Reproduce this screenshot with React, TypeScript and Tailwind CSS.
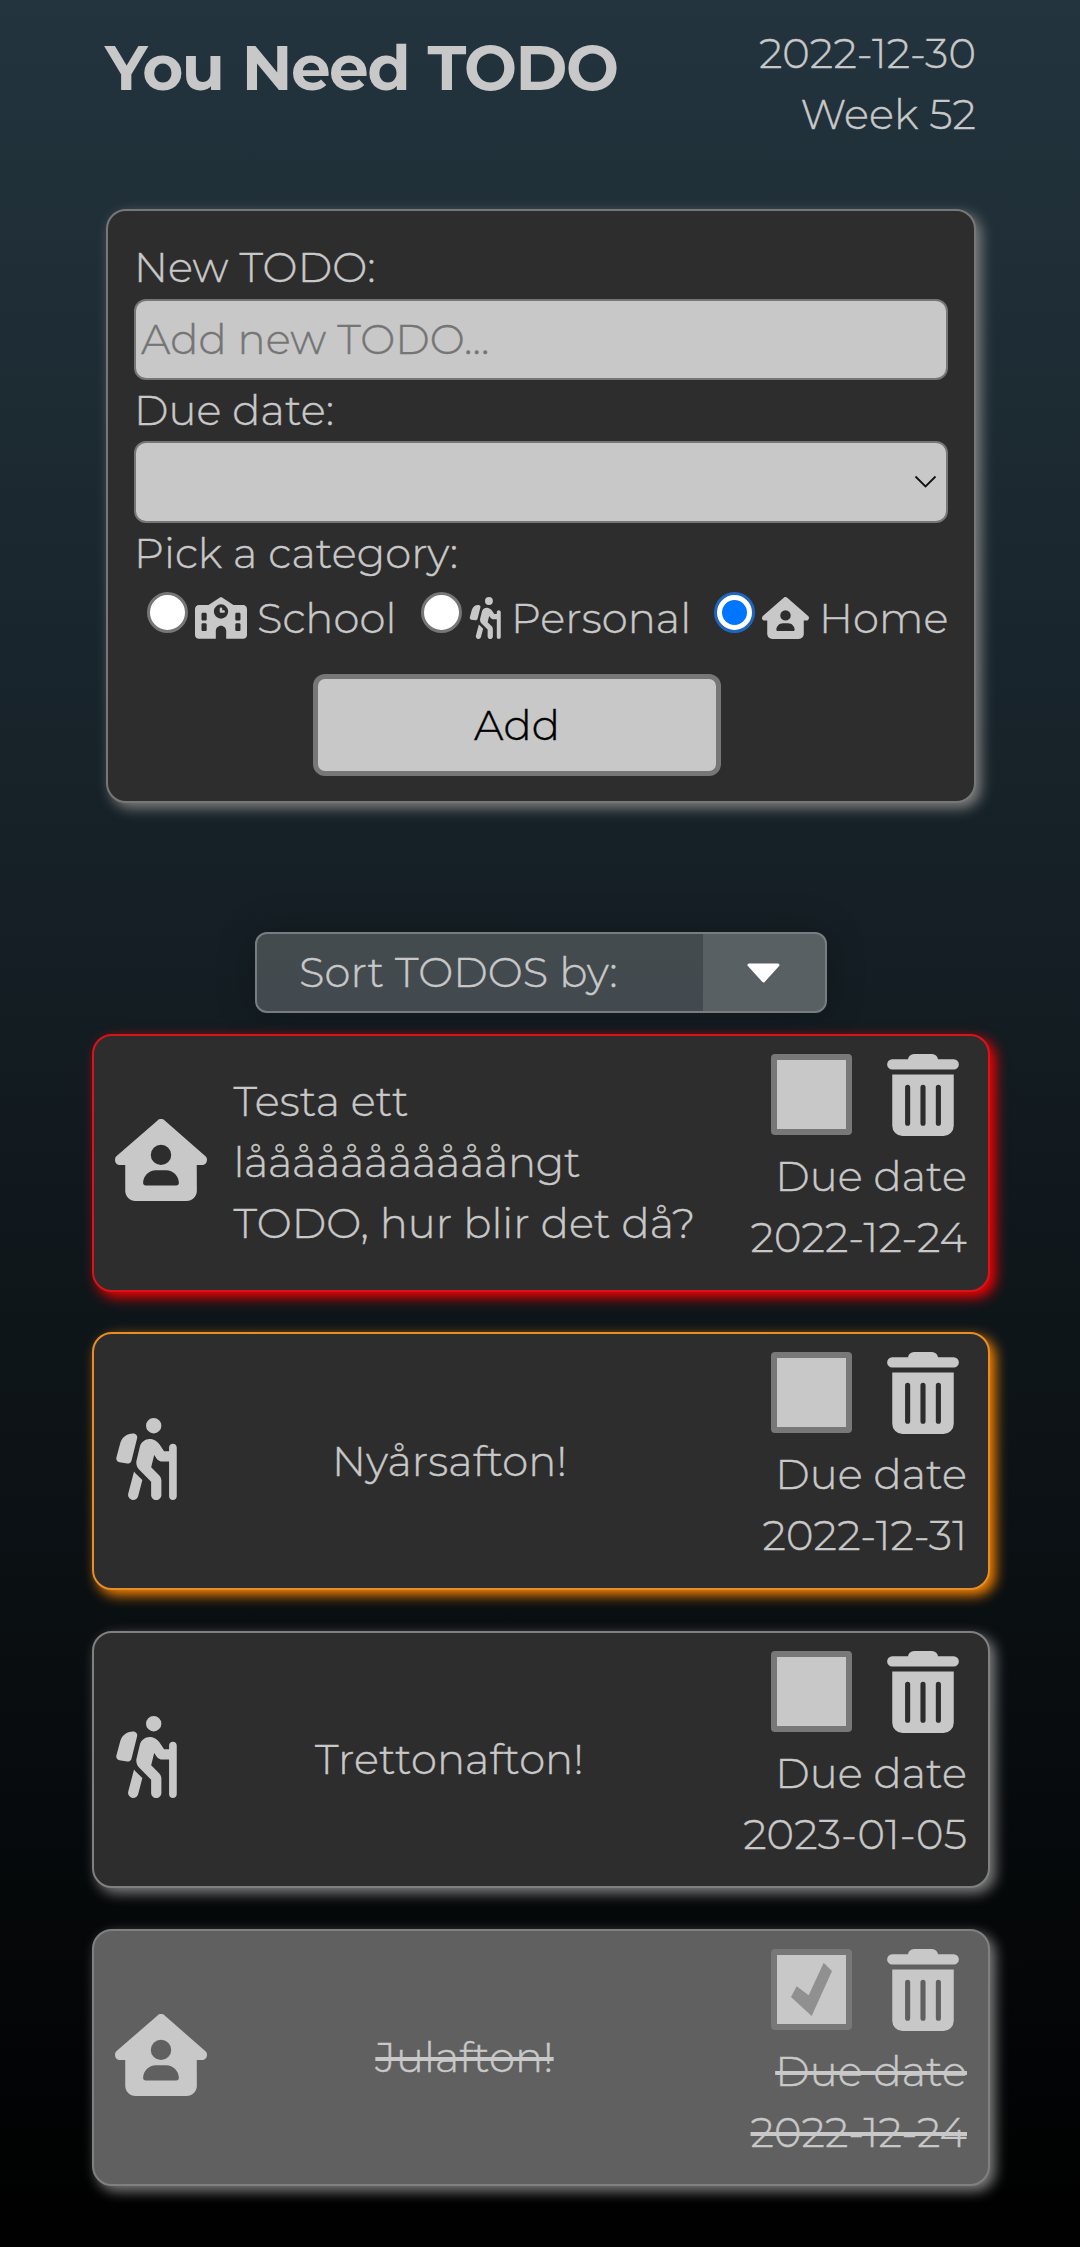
import type { ReactNode } from "react";
import { FaHouseUser, FaPersonHiking, FaSchool } from "react-icons/fa6";

type Todo = {
  lines: string[];
  category: "home" | "personal";
  due: string;
  tone: string;
  done?: boolean;
};

const NEUTRAL = "border-[#808080] bg-[#2d2d2d] shadow-[5px_5px_13px_#808080]";

const todos: Todo[] = [
  {
    lines: ["Testa ett", "lååååååååååångt", "TODO, hur blir det då?"],
    category: "home",
    due: "2022-12-24",
    tone: "border-[#d8141a] bg-[#2d2d2d] shadow-[5px_5px_13px_#ff0000]",
  },
  {
    lines: ["Nyårsafton!"],
    category: "personal",
    due: "2022-12-31",
    tone: "border-[#e68d28] bg-[#2d2d2d] shadow-[5px_5px_13px_#ff8800]",
  },
  { lines: ["Trettonafton!"], category: "personal", due: "2023-01-05", tone: NEUTRAL },
  {
    lines: ["Julafton!"],
    category: "home",
    due: "2022-12-24",
    tone: "border-[#808080] bg-[#606060] shadow-[5px_5px_13px_#808080]",
    done: true,
  },
];

function TrashIcon() {
  return (
    <svg viewBox="0 0 448 512" className="h-[82px] w-[72px]" fill="currentColor">
      <path d="M32 33h98c4-20 18-33 38-33h112c20 0 34 13 38 33h98a32 32 0 0 1 0 64H32a32 32 0 0 1 0-64z" />
      <path
        fillRule="evenodd"
        d="M32 128h384v320a64 64 0 0 1-64 64H96a64 64 0 0 1-64-64V128zm96 64a16 16 0 0 0-16 16v224a16 16 0 0 0 32 0V208a16 16 0 0 0-16-16zm96 0a16 16 0 0 0-16 16v224a16 16 0 0 0 32 0V208a16 16 0 0 0-16-16zm96 0a16 16 0 0 0-16 16v224a16 16 0 0 0 32 0V208a16 16 0 0 0-16-16z"
      />
    </svg>
  );
}

function Checkbox({ checked }: { checked?: boolean }) {
  return (
    <div className="h-[81px] w-[81px] rounded-[4px] border-[6px] border-[#787878] bg-[#c8c8c8]">
      {checked && (
        <svg viewBox="0 0 207 207" className="size-full" fill="#909090">
          <path d="M140 23l25 25-61 135-62-57 17-32 36 27z" />
        </svg>
      )}
    </div>
  );
}

function Radio({ checked }: { checked?: boolean }) {
  return checked ? (
    <span className="mt-[4px] flex size-[41px] shrink-0 items-center justify-center rounded-full border-[3px] border-[#1f66c0] bg-white">
      <span className="size-[25px] rounded-full bg-[#0075ff]" />
    </span>
  ) : (
    <span className="mt-[4px] size-[41px] shrink-0 rounded-full border-[3px] border-[#767676] bg-white" />
  );
}

function Category({
  icon,
  label,
  checked,
  className,
}: {
  icon: ReactNode;
  label: string;
  checked?: boolean;
  className: string;
}) {
  return (
    <label className={`flex shrink-0 items-start ${className}`}>
      <Radio checked={checked} />
      <span className="mt-[9px] ml-[7px]">{icon}</span>
      <span className="ml-[10px]">{label}</span>
    </label>
  );
}

function TodoCard({ todo }: { todo: Todo }) {
  const strike = todo.done ? "line-through decoration-[4px]" : "";
  return (
    <li
      className={`flex h-[257.5px] rounded-[20px] border-2 pt-[18px] pr-[21px] pl-[21px] ${todo.tone}`}
    >
      <div className="-mt-[18px] mr-[25px] flex items-center">
        {todo.category === "home" ? (
          <FaHouseUser className="-mt-[5px] h-[82px] w-[92px]" />
        ) : (
          <FaPersonHiking className="-mt-[4px] h-[82px] w-[62px]" />
        )}
      </div>
      <div className="-mt-[18px] flex flex-1 items-center justify-center">
        <p className={`whitespace-nowrap ${strike}`}>
          {todo.lines.map((line) => (
            <span
              key={line}
              className={line.startsWith("lå") ? "block tracking-[-0.3px]" : "block"}
            >
              {line}
            </span>
          ))}
        </p>
      </div>
      <div className="flex w-[270px] flex-col items-end">
        <div className="mr-[8px] flex h-[92px] items-start gap-[35px]">
          <Checkbox checked={todo.done} />
          <TrashIcon />
        </div>
        <p className={`text-right ${strike}`}>
          Due date
          <br />
          {todo.due}
        </p>
      </div>
    </li>
  );
}

export default function App() {
  return (
    <main className="h-[2247px] overflow-hidden bg-[linear-gradient(to_bottom,#23343e,#000000)] font-['Montserrat','Open_Sans',sans-serif] text-[41.7px] leading-[61px] font-light tracking-[0.1px] text-[#c8c8c8] [-webkit-text-stroke-width:0.4px] [font-variant-ligatures:none]">
      <header className="flex h-[209px] justify-between pr-[104px] pl-[105px]">
        <h1 className="mt-[29px] text-[62.8px] leading-[77px] font-bold tracking-[-1.5px] whitespace-nowrap [-webkit-text-stroke-width:0px] [word-spacing:2px]">
          You Need TODO
        </h1>
        <div className="mt-[23px] text-right">
          2022-12-30
          <br />
          Week 52
        </div>
      </header>

      <form className="ml-[106px] flex h-[594px] w-[870px] flex-col rounded-[20px] border-2 border-[#777777] bg-[#2d2d2d] px-[26px] pt-[26px] shadow-[5px_5px_13px_#808080]">
        <label>New TODO:</label>
        <div className="mt-[1px] h-[81px] rounded-[12px] border-2 border-[#767676] bg-[#c8c8c8] pt-[8px] pl-[5px] text-[#757575]">
          Add new TODO...
        </div>
        <label>Due date:</label>
        <div className="flex h-[82px] items-center justify-end rounded-[12px] border-2 border-[#767676] bg-[#c8c8c8] pr-[9px]">
          <svg viewBox="0 0 23 14" className="h-[14px] w-[23px]" fill="none" stroke="#111" strokeWidth="1.8">
            <path d="M1.5 1.5l10 10 10-10" />
          </svg>
        </div>
        <label>Pick a category:</label>
        <div className="mt-[4px] flex h-[60px] whitespace-nowrap">
          <Category
            className="ml-[13px] w-[274px]"
            label="School"
            icon={<FaSchool className="h-[42px] w-[52px]" />}
          />
          <Category
            className="w-[293px]"
            label="Personal"
            icon={<FaPersonHiking className="h-[42px] w-[32px]" />}
          />
          <Category
            className=""
            label="Home"
            checked
            icon={<FaHouseUser className="h-[42px] w-[47px]" />}
          />
        </div>
        <button
          type="button"
          className="mt-[26px] ml-[179px] h-[102px] w-[408px] rounded-[12px] border-[5px] border-[#777777] bg-[#c8c8c8] text-black"
        >
          Add
        </button>
      </form>

      <div className="mt-[129px] ml-[255px] flex h-[81px] w-[572px] overflow-hidden rounded-[12px] border-2 border-[#797d80] bg-white/20 leading-[77px] shadow-[0_0_40px_rgba(0,0,0,0.2)]">
        <span className="flex-1 pl-[42px]">Sort TODOS by:</span>
        <span className="flex w-[122px] items-center justify-center bg-white/12">
          <svg viewBox="0 0 33 20" className="mr-[2px] h-[20px] w-[33px]" fill="#fff" stroke="#fff" strokeWidth="3" strokeLinejoin="round">
            <path d="M2 2h29L16.500 18z" />
          </svg>
        </span>
      </div>

      <ul className="mt-[21px] ml-[92px] flex w-[898px] flex-col gap-[40.8px]">
        {todos.map((todo) => (
          <TodoCard key={todo.lines[0]} todo={todo} />
        ))}
      </ul>
    </main>
  );
}
